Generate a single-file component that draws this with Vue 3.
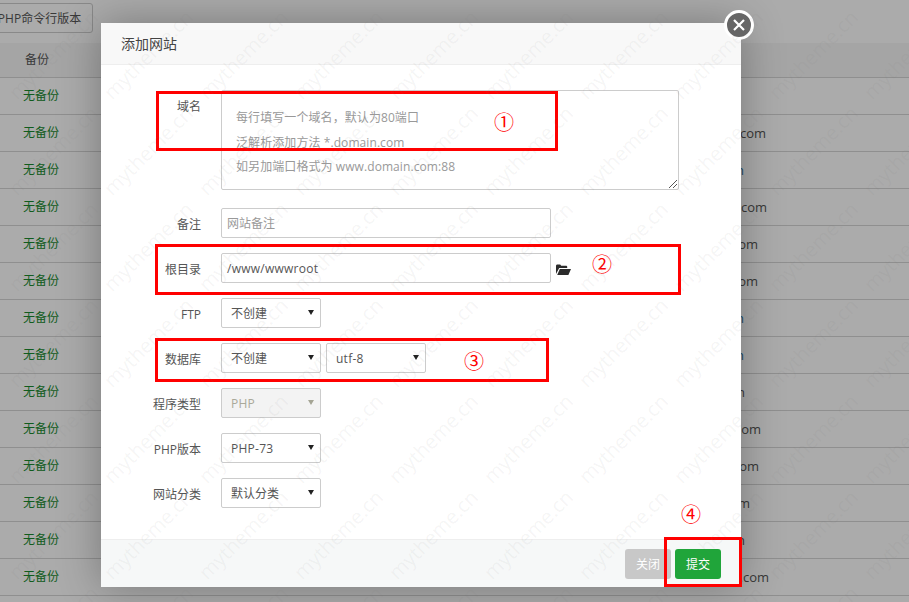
<script setup>
// end = x where the site text stops, the modal hides the rest
const sites = [
  { end: 0, text: '' },
  { end: 766, text: 'example.com' },
  { end: 744, text: 'example.cn', link: true },
  { end: 767, text: 'example.com' },
  { end: 758, text: 'example.com' },
  { end: 758, text: 'example.com' },
  { end: 744, text: 'example.cn', link: true },
  { end: 744, text: 'example.cn', link: true },
  { end: 745, text: 'example.cn' },
  { end: 761, text: 'example.com' },
  { end: 759, text: 'example.com' },
  { end: 750, text: 'example.com' },
  { end: 745, text: 'example.cn' },
  { end: 769, text: 'example.com' }
]
const rows = sites.map((s, i) => ({ ...s, id: i, right: 909 - s.end }))
const marks = Array.from({ length: 70 }, (_, i) => i)
</script>

<template>
  <div class="page">
    <div class="toolbar">
      <button class="tool-btn">PHP命令行版本</button>
    </div>
    <div class="table-head">备份</div>
    <div v-for="row in rows" :key="row.id" class="table-row">
      <span class="backup">无备份</span>
      <span class="site" :class="{ link: row.link }" :style="{ right: row.right + 'px' }">{{ row.text }}</span>
    </div>

    <div class="shade"></div>

    <div class="modal">
      <div class="modal-head">添加网站</div>
      <div class="modal-body">
        <div class="form-row domain-row">
          <label>域名</label>
          <div class="fake-textarea">
            <p>每行填写一个域名，默认为80端口</p>
            <p>泛解析添加方法 *.domain.com</p>
            <p>如另加端口格式为 www.domain.com:88</p>
            <svg class="grip" width="10" height="10" viewBox="0 0 10 10">
              <path d="M1 9L9 1M5 9L9 5" stroke="#555" fill="none" />
            </svg>
          </div>
        </div>
        <div class="form-row">
          <label>备注</label>
          <div class="input placeholder">网站备注</div>
        </div>
        <div class="form-row">
          <label>根目录</label>
          <div class="input latin">/www/wwwroot</div>
          <svg class="folder" width="15" height="11" viewBox="0 0 15 11">
            <path d="M0 10V1.5L.8.5h3.4l1 1.3h5.3l.7.7V4H3.2L0 10z" fill="#2b2b2b" />
            <path d="M3.8 5H15l-2.6 6H1.200z" fill="#2b2b2b" />
          </svg>
        </div>
        <div class="form-row">
          <label>FTP</label>
          <div class="select">不创建</div>
        </div>
        <div class="form-row">
          <label>数据库</label>
          <div class="select">不创建</div>
          <div class="select latin">utf-8</div>
        </div>
        <div class="form-row">
          <label>程序类型</label>
          <div class="select disabled latin">PHP</div>
        </div>
        <div class="form-row">
          <label>PHP版本</label>
          <div class="select latin">PHP-73</div>
        </div>
        <div class="form-row">
          <label>网站分类</label>
          <div class="select">默认分类</div>
        </div>

        <div class="mark-box box1"></div>
        <div class="mark-box box2"></div>
        <div class="mark-box box3"></div>
        <span class="num num1">①</span>
        <span class="num num2">②</span>
        <span class="num num3">③</span>
        <span class="num num4">④</span>
      </div>
      <div class="modal-foot">
        <button class="btn btn-close">关闭</button>
        <button class="btn btn-submit">提交</button>
      </div>
      <div class="mark-box box4"></div>
      <div class="close-x">
        <svg width="16" height="16" viewBox="0 0 16 16">
          <path d="M3 3L13 13M13 3L3 13" stroke="#fff" stroke-width="2.2" fill="none" />
        </svg>
      </div>
    </div>

    <div class="watermarks">
      <span v-for="m in marks" :key="m" class="wm"><i>mytheme.cn</i></span>
    </div>
  </div>
</template>

<style>
html, body {
  margin: 0;
  overflow: hidden;
}
</style>

<style scoped>
.page {
  position: relative;
  width: 909px;
  height: 602px;
  overflow: hidden;
  background: #fff;
  font-family: "Open Sans", "Noto Sans CJK SC", sans-serif;
  font-size: 12px;
  color: #555;
}

.toolbar {
  height: 43px;
  padding: 3px 0 0;
  box-sizing: border-box;
}

.tool-btn {
  display: block;
  margin-left: -14px;
  width: 107px;
  height: 30px;
  padding: 0;
  background: #fff;
  border: 1px solid #ccc;
  border-radius: 3px;
  font: inherit;
  color: #555;
}

.table-head {
  height: 34px;
  line-height: 34px;
  padding-left: 25px;
  background: #f6f6f6;
  border-bottom: 1px solid #d5d5d5;
}

.table-row {
  height: 36px;
  line-height: 36px;
  padding-left: 23px;
  border-bottom: 1px solid #d5d5d5;
}

.backup {
  color: #188a2e;
}

.site {
  position: absolute;
  font-size: 13px;
  white-space: nowrap;
}

.site.link {
  color: #2a6f9e;
}

.shade {
  position: absolute;
  inset: 0;
  background: rgba(0, 0, 0, 0.33);
}

.modal {
  position: absolute;
  left: 101px;
  top: 23px;
  width: 640px;
  height: 564px;
  display: flex;
  flex-direction: column;
  background: #fff;
  box-shadow: 0 0 40px rgba(0, 0, 0, 0.3);
}

.modal-head {
  height: 41px;
  line-height: 41px;
  padding-left: 20px;
  background: #f8f8f8;
  border-bottom: 1px solid #eee;
  font-size: 14px;
  color: #444;
  flex: none;
}

.modal-body {
  position: relative;
  flex: 1;
  padding: 25px 0 0;
  display: flex;
  flex-direction: column;
  gap: 15px;
}

.form-row {
  display: flex;
  align-items: center;
  gap: 5px;
  height: 30px;
}

.form-row label {
  width: 100px;
  margin-right: 15px;
  margin-top: 2px;
  text-align: right;
  flex: none;
  color: #555;
}

.domain-row {
  height: 100px;
  margin-bottom: 3px;
  align-items: flex-start;
}

.domain-row label {
  margin-top: 7px;
}

.fake-textarea {
  position: relative;
  width: 458px;
  height: 100px;
  box-sizing: border-box;
  padding: 15px 14px 0;
  border: 1px solid #ccc;
  border-radius: 2px;
  color: #999;
  letter-spacing: 0.08px;
}

.fake-textarea p {
  margin: 0;
  line-height: 24.5px;
}

.grip {
  position: absolute;
  right: 0;
  bottom: 0;
}

.input {
  width: 330px;
  height: 30px;
  box-sizing: border-box;
  line-height: 30px;
  padding-left: 5px;
  border: 1px solid #ccc;
  border-radius: 2px;
  color: #555;
}

.placeholder {
  color: #999;
}

.folder {
  margin-top: 2px;
  margin-left: 0;
}

.select {
  position: relative;
  width: 100px;
  height: 30px;
  box-sizing: border-box;
  line-height: 30px;
  padding-left: 9px;
  border: 1px solid #ccc;
  border-radius: 2px;
  color: #555;
}

.latin {
  letter-spacing: 0.25px;
}

.select::after {
  content: "";
  position: absolute;
  right: 6px;
  top: 11px;
  border-left: 3px solid transparent;
  border-right: 3px solid transparent;
  border-top: 5px solid #222;
}

.select.disabled {
  background: #f3f3f3;
  color: #aaa99a;
}

.select.disabled::after {
  border-top-color: #a5a595;
}

.modal-foot {
  flex: none;
  height: 48px;
  box-sizing: border-box;
  display: flex;
  justify-content: flex-end;
  align-items: center;
  gap: 4px;
  padding-right: 20px;
  background: #f6f8f8;
  border-top: 1px solid #eee;
}

.btn {
  width: 46px;
  height: 30px;
  padding: 0;
  border: none;
  border-radius: 3px;
  font: inherit;
  color: #fff;
}

.btn-close {
  background: #c8c8c8;
}

.btn-submit {
  background: #20a53a;
}

.mark-box {
  position: absolute;
  box-sizing: border-box;
  border: 3px solid #f00;
  pointer-events: none;
}

.box1 {
  left: 55px;
  top: 26px;
  width: 402px;
  height: 60px;
}

.box2 {
  left: 54px;
  top: 179px;
  width: 526px;
  height: 51px;
}

.box3 {
  left: 54px;
  top: 273px;
  width: 394px;
  height: 44px;
}

.box4 {
  left: 563px;
  top: 514px;
  width: 78px;
  height: 50px;
}

.num {
  position: absolute;
  color: #f00;
  font-size: 20px;
  line-height: 20px;
  font-family: "Noto Sans CJK SC", sans-serif;
}

.num1 { left: 393px; top: 47px; }
.num2 { left: 491px; top: 189px; }
.num3 { left: 363px; top: 286px; }
.num4 { left: 580px; top: 439px; }

.close-x {
  position: absolute;
  right: -13px;
  top: -13px;
  width: 30px;
  height: 30px;
  box-sizing: border-box;
  display: flex;
  align-items: center;
  justify-content: center;
  background: #666;
  border: 3px solid #fff;
  border-radius: 50%;
}

.watermarks {
  position: absolute;
  left: 5px;
  top: 6px;
  display: grid;
  grid-template-columns: repeat(10, 95px);
  grid-auto-rows: 96px;
  pointer-events: none;
}

.wm {
  display: flex;
  align-items: center;
  justify-content: center;
}

.wm i {
  font-style: normal;
  white-space: nowrap;
  font-family: "Open Sans", sans-serif;
  font-size: 20px;
  color: rgba(120, 120, 120, 0.08);
  transform: rotate(-45deg);
}
</style>
